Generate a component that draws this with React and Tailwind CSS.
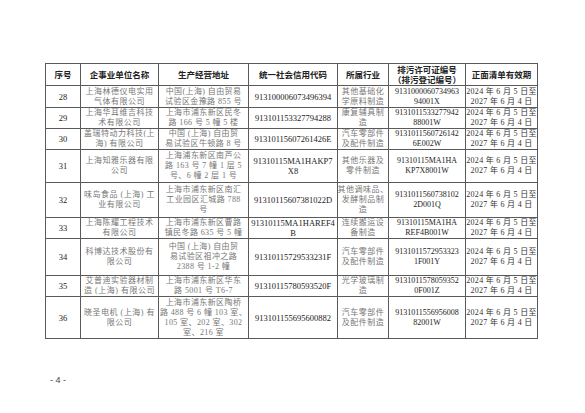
import React from 'react';

const font = { fontFamily: '"Liberation Serif", "Noto Sans CJK SC", serif' };

const headers = [
    ['序号'],
    ['企事业单位名称'],
    ['生产经营地址'],
    ['统一社会信用代码'],
    ['所属行业'],
    ['排污许可证编号', '（排污登记编号）'],
    ['正面清单有效期'],
];

const date = ['2024 年 6 月 5 日至', '2027 年 6 月 4 日'];

const rows = [
    {
        no: '28', h: 'h-[22px]',
        name: ['上海林德仪电实用', '气体有限公司'],
        addr: ['中国(上海) 自由贸易', '试验区金豫路 855 号'],
        code: ['913100006073496394'],
        ind: ['其他基础化', '学原料制造'],
        permit: ['9131000060734963', '94001X'],
    },
    {
        no: '29', h: 'h-[21px]',
        name: ['上海华耳维吉科技', '术有限公司'],
        addr: ['上海市浦东新区民冬', '路 166 号 5 幢 5 楼'],
        code: ['913101153327794288'],
        ind: ['康复辅具制', '造'],
        permit: ['9131011533277942', '88001W'],
    },
    {
        no: '30', h: 'h-[21px]',
        name: ['盖瑞特动力科技(上', '海) 有限公司'],
        addr: ['中国 (上海) 自由贸', '易试验区牛顿路 8 号'],
        code: ['91310115607261426E'],
        ind: ['汽车零部件', '及配件制造'],
        permit: ['9131011560726142', '6E002W'],
    },
    {
        no: '31', h: 'h-[33px]',
        name: ['上海知雅乐器有限', '公司'],
        addr: ['上海浦东新区南芦公', '路 163 号 7 幢 1 层 5', '号、6 幢 2 层 1 号'],
        code: ['91310115MA1HAKP7', 'X8'],
        ind: ['其他乐器及', '零件制造'],
        permit: ['91310115MA1HA', 'KP7X8001W'],
    },
    {
        no: '32', h: 'h-[35px]',
        name: ['味岛食品 (上海) 工', '业有限公司'],
        addr: ['上海市浦东新区南汇', '工业园区汇城路 788', '号'],
        code: ['91310115607381022D'],
        ind: ['其他调味品、', '发酵制品制', '造'],
        permit: ['9131011560738102', '2D001Q'],
    },
    {
        no: '33', h: 'h-[20px]',
        name: ['上海陈耀工程技术', '有限公司'],
        addr: ['上海市浦东新区曹路', '镇民冬路 635 号 5 幢'],
        code: ['91310115MA1HAREF4', 'B'],
        ind: ['连续搬运设', '备制造'],
        permit: ['91310115MA1HA', 'REF4B001W'],
    },
    {
        no: '34', h: 'h-[37px]',
        name: ['科博达技术股份有', '限公司'],
        addr: ['中国 (上海) 自由贸', '易试验区祖冲之路', '2388 号 1-2 幢'],
        code: ['91310115729533231F'],
        ind: ['汽车零部件', '及配件制造'],
        permit: ['9131011572953323', '1F001Y'],
    },
    {
        no: '35', h: 'h-[20px]',
        name: ['艾普迪实验器材制', '造 (上海) 有限公司'],
        addr: ['上海市浦东新区华东', '路 5001 号 T6-7'],
        code: ['91310115780593520F'],
        ind: ['光学玻璃制', '造'],
        permit: ['9131011578059352', '0F001Z'],
    },
    {
        no: '36', h: 'h-[42px]',
        name: ['晓圣电机 (上海) 有', '限公司'],
        addr: ['上海市浦东新区陶桥', '路 488 号 6 幢 103 室、', '105 室、202 室、302', '室、216 室'],
        code: ['913101155695600882'],
        ind: ['汽车零部件', '及配件制造'],
        permit: ['9131011556956008', '82001W'],
    },
];

const Lines = ({ lines, className = '' }) => (
    <div className={`flex flex-col items-center ${className}`}>
        {lines.map((l, i) => (
            <span key={i} className="whitespace-nowrap">{l}</span>
        ))}
    </div>
);

const cell = 'border border-[#5a5a5a] p-0 align-middle text-center overflow-hidden';

export default function App() {
    return (
        <div className="w-[585px] h-[413px] bg-white pt-[63px] pl-[45px]" style={font}>
            <table className="table-fixed border-collapse w-[492px] text-[8px] leading-[10px] text-[#777]">
                <colgroup>
                    <col className="w-[35px]" />
                    <col className="w-[78px]" />
                    <col className="w-[90px]" />
                    <col className="w-[89px]" />
                    <col className="w-[51px]" />
                    <col className="w-[77px]" />
                    <col className="w-[72px]" />
                </colgroup>
                <thead>
                    <tr className="h-[22px]">
                        {headers.map((h, i) => (
                            <th key={i} className={`${cell} font-bold text-[8.5px] text-[#222]`}>
                                <Lines lines={h} />
                            </th>
                        ))}
                    </tr>
                </thead>
                <tbody>
                    {rows.map((r) => (
                        <tr key={r.no} className={r.h}>
                            <td className={`${cell} text-[8.5px] text-[#222]`}>{r.no}</td>
                            <td className={cell}>
                                <Lines lines={r.name} className="tracking-[0.5px]" />
                            </td>
                            <td className={cell}>
                                <Lines lines={r.addr} className="tracking-[0.4px]" />
                            </td>
                            <td className={`${cell} text-[8.5px] text-[#222]`}>
                                <Lines lines={r.code} />
                            </td>
                            <td className={cell}>
                                <Lines lines={r.ind} className="tracking-[0.5px]" />
                            </td>
                            <td className={`${cell} text-[8px] text-[#222]`}>
                                <Lines lines={r.permit} />
                            </td>
                            <td className={`${cell} text-[8px] text-[#333]`}>
                                <Lines lines={date} className="tracking-[0.3px]" />
                            </td>
                        </tr>
                    ))}
                </tbody>
            </table>
            <div className="mt-[35px] ml-[5px] text-[9px] leading-[12px] text-[#444]" style={{ fontFamily: '"Liberation Sans", sans-serif' }}>
                - 4 -
            </div>
        </div>
    );
}
